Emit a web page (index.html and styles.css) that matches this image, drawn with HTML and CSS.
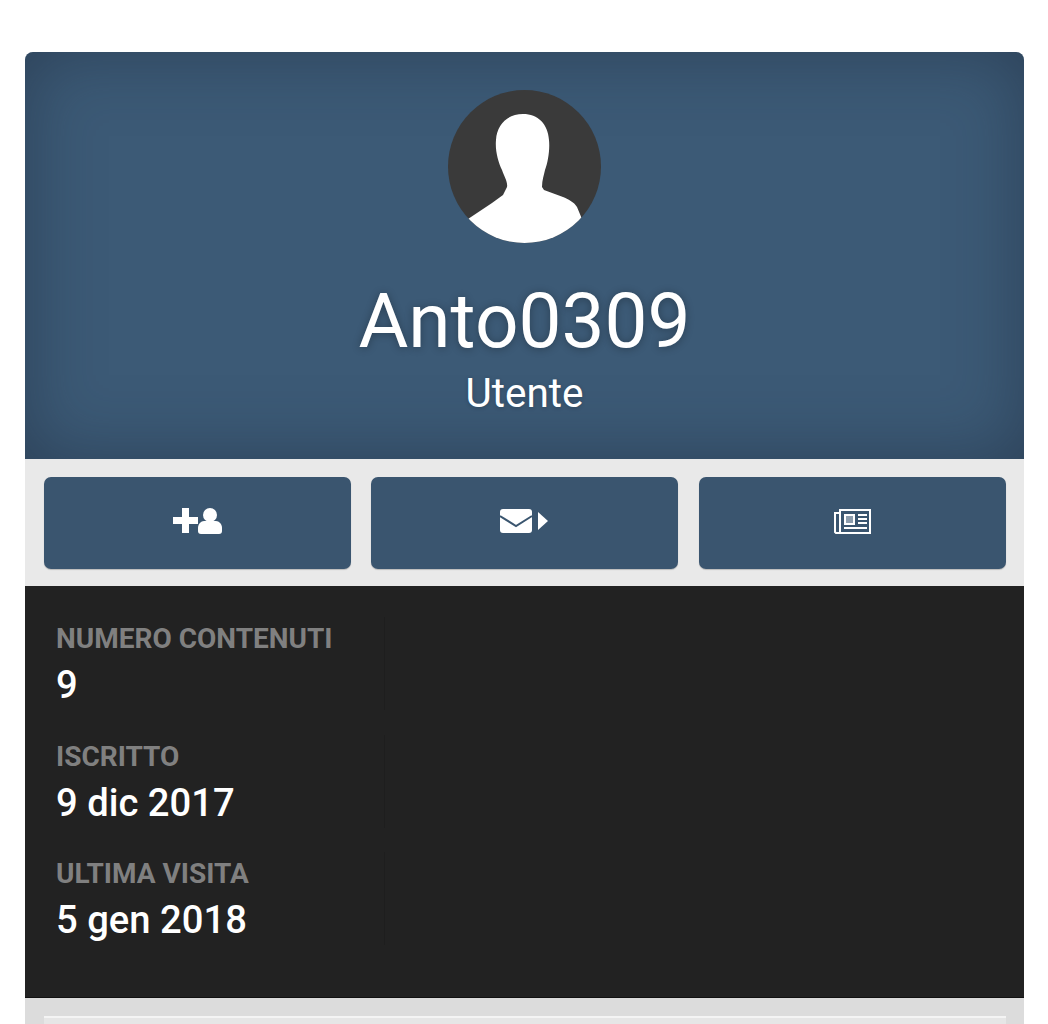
FILE: index.html
```html
<!DOCTYPE html>
<html>
<head>
  <title>Anto0309</title>
  <link rel="stylesheet" href="styles.css">
</head>
<body>
  <div class="profile">
    <div class="cover">
      <div class="avatar">
        <svg width="153" height="153" viewBox="0 0 153 153">
          <path fill="#fff" d="M75 24C60 24 49 34 48 50 47 60 50 72 54 80 56 86 60 92 59 97L55 105 44 113 20 129V154H134V129L129 117C126 112 120 109 115 107L96 100 94 97C94 90 96 85 97 80 100 72 102 60 101 50 100 34 90 24 75 24z"/>
        </svg>
      </div>
      <h1 class="name">Anto0309</h1>
      <div class="group">Utente</div>
    </div>

    <div class="actions">
      <a class="btn">
        <svg width="50" height="28" viewBox="0 0 50 28">
          <path fill="#fff" d="M9 1h7v9h9v7h-9v9H9v-9H0v-7h9z"/>
          <circle fill="#fff" cx="37" cy="8" r="7"/>
          <path fill="#fff" d="M25 21c0-4 3-7 6-7h12c3 0 6 3 6 7v3a3 3 0 0 1-3 3H28a3 3 0 0 1-3-3z"/>
        </svg>
      </a>
      <a class="btn">
        <svg width="49" height="24" viewBox="0 0 49 24">
          <rect fill="#fff" width="32" height="24" rx="3"/>
          <path fill="none" stroke="#3a556f" stroke-width="2" d="M0 7l16 10L32 7"/>
          <path fill="#fff" d="M38 3l10 9-10 9z"/>
        </svg>
      </a>
      <a class="btn">
        <svg width="37" height="25" viewBox="0 0 37 25" fill="none" stroke="#fff" stroke-width="2">
          <rect x="6" y="1" width="30" height="23"/>
          <path d="M6 4H1v19l1 1h4"/>
          <rect x="11" y="6" width="9" height="9" fill="#8d9dad"/>
          <path d="M24 6h9M24 10h9M24 14h9M10 19h23"/>
        </svg>
      </a>
    </div>

    <div class="about">
      <div class="stat">
        <div class="stat-label">NUMERO CONTENUTI</div>
        <div class="stat-value">9</div>
      </div>
      <div class="stat">
        <div class="stat-label">ISCRITTO</div>
        <div class="stat-value">9 dic 2017</div>
      </div>
      <div class="stat">
        <div class="stat-label">ULTIMA VISITA</div>
        <div class="stat-value">5 gen 2018</div>
      </div>
    </div>

    <div class="bottom">
      <div class="card"></div>
    </div>
  </div>
</body>
</html>
```

FILE: styles.css
```css
body {
  font-family: Roboto, sans-serif;
  background-color: #fff;
  margin: 0;
  padding: 52px 24px 0 25px;
}

.profile {
  display: flex;
  flex-direction: column;
}

.cover {
  height: 407px;
  box-sizing: border-box;
  padding-top: 38px;
  background-color: #3c5a76;
  border-radius: 8px 8px 0 0;
  box-shadow: inset 0 0 70px rgba(30, 42, 60, 0.5);
  text-align: center;
  color: #fff;
}

.avatar {
  width: 153px;
  height: 153px;
  margin: 0 auto;
  border-radius: 50%;
  background-color: #3a3a3a;
  overflow: hidden;
}

.name {
  margin: 36px 0 0;
  font-size: 76.500px;
  line-height: 84px;
  font-weight: 400;
  text-shadow: 0 1px 8px rgba(0, 0, 0, 0.3);
}

.group {
  margin-top: 8px;
  font-size: 40.500px;
  line-height: 44px;
  text-shadow: 0 1px 4px rgba(0, 0, 0, 0.2);
}

.actions {
  display: flex;
  gap: 20px;
  height: 127px;
  box-sizing: border-box;
  padding: 18px 18px 17px 19px;
  background-color: #e9e9e9;
}

.btn {
  flex: none;
  width: 307px;
  display: flex;
  align-items: center;
  justify-content: center;
  padding-bottom: 4px;
  box-sizing: border-box;
  background-color: #3a556f;
  border-radius: 7px;
  box-shadow: 0 1px 1px rgba(0, 0, 0, 0.2);
}

.btn:last-child {
  margin-left: 1px;
}

.about {
  height: 412px;
  box-sizing: border-box;
  padding: 31px 31px 0;
  background-color: #222;
  border-bottom: 1px solid #111;
}

.stat {
  width: 329px;
  height: 93px;
  box-sizing: border-box;
  padding-top: 4px;
  margin-bottom: 24.500px;
  border-right: 1px solid #1e1e1e;
}

.stat-label {
  font-size: 28px;
  line-height: 36px;
  font-weight: 700;
  color: #808080;
}

.stat-value {
  margin-top: 5px;
  font-size: 38.200px;
  line-height: 46px;
  font-weight: 500;
  color: #fff;
}

.bottom {
  height: 26px;
  box-sizing: border-box;
  padding: 18px 18px 0 19px;
  background-color: #dcdcdc;
}

.card {
  height: 8px;
  box-sizing: border-box;
  background-color: #e6e6e6;
  border-top: 2px solid #f4f4f4;
}
```
